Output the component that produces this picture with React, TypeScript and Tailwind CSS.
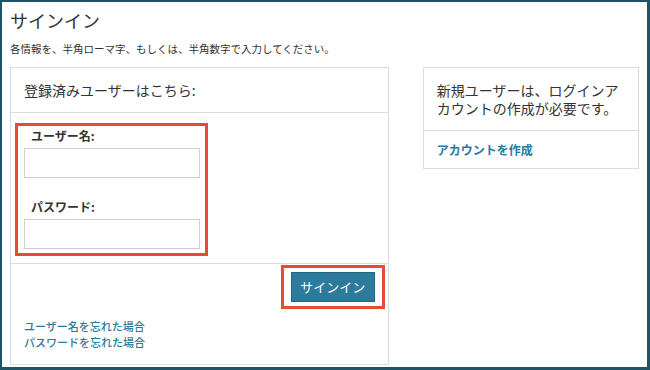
const App = () => {
  return (
    <div
      className="h-[370px] w-[650px] overflow-hidden border-2 border-r-[3px] border-b-[3px] border-[#1f5366] bg-white text-[#333]"
      style={{ fontFamily: '"Noto Sans CJK JP", "Noto Sans", sans-serif' }}
    >
      <div className="flex flex-col px-2 pt-[5px]">
        <h1 className="text-[18px] leading-[26px] font-normal">サインイン</h1>
        <p className="mt-[9px] text-[10.5px] leading-[14px]">
          各情報を、半角ローマ字、もしくは、半角数字で入力してください。
        </p>

        <div className="mt-[11px] flex items-start gap-[34px]">
          {/* 登録済みユーザー */}
          <div className="flex h-[298px] w-[380px] flex-col border border-[#dcdcdc]">
            <div className="flex h-[45px] items-center border-b border-[#dcdcdc] px-[13px] text-[14px]">
              登録済みユーザーはこちら:
            </div>
            <div className="px-[4px] pt-[10px]">
              <div className="flex w-[193px] flex-col border-[3px] border-[#e84a35] px-[6px] pb-[4px]">
                <label className="pl-[7px] text-[12px] font-bold leading-[20px]">
                  ユーザー名:
                </label>
                <input className="mt-[2px] h-[30px] w-[176px] border border-[#d0d0d0] outline-none" />
                <label className="mt-[19px] pl-[7px] text-[12px] font-bold leading-[20px]">
                  パスワード:
                </label>
                <input className="mt-[2px] h-[30px] w-[176px] border border-[#d0d0d0] outline-none" />
              </div>
            </div>
            <div className="mt-[7px] flex justify-end border-t border-[#dcdcdc] pr-[3px]">
              <div className="mt-[1px] border-[3px] border-[#e84a35] px-[7px] py-[4px]">
                <button className="h-[30px] w-[84px] border border-[#25667f] bg-[#2d7b9c] text-[13px] text-white">
                  サインイン
                </button>
              </div>
            </div>
            <div className="mt-[9px] flex flex-col px-[13px] text-[11px] leading-[16px] font-medium text-[#2a7aa1]">
              <a>ユーザー名を忘れた場合</a>
              <a>パスワードを忘れた場合</a>
            </div>
          </div>

          {/* 新規ユーザー */}
          <div className="flex w-[217px] flex-col border border-[#dcdcdc]">
            <div className="border-b border-[#dcdcdc] px-[13px] pt-[13px] pb-[13px] text-[14px] leading-[18px]">
              新規ユーザーは、ログインアカウントの作成が必要です。
            </div>
            <div className="flex h-[37px] items-center px-[13px] text-[12px] font-bold text-[#2a7aa1]">
              アカウントを作成
            </div>
          </div>
        </div>
      </div>
    </div>
  );
};

export default App;
